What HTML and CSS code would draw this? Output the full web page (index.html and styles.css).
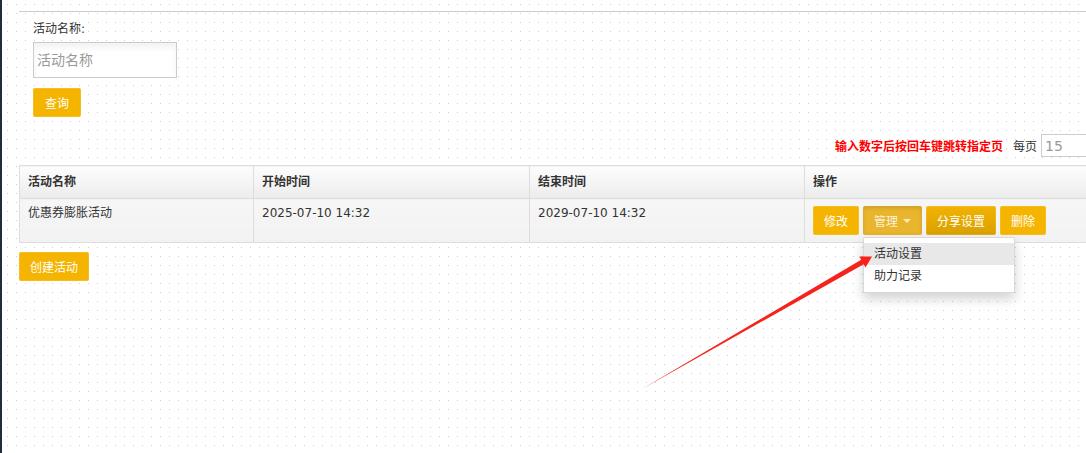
FILE: index.html
```html
<!DOCTYPE html>
<html lang="zh-CN">
<head>
    <meta charset="UTF-8">
    <meta name="viewport" content="width=device-width, initial-scale=1.0">
    <title>活动列表</title>
    <link rel="stylesheet" href="styles.css">
</head>
<body>

<div class="page">
    <form class="search">
        <label for="act-name">活动名称:</label>
        <input type="text" id="act-name" placeholder="活动名称">
        <button type="button" class="btn">查询</button>
    </form>

    <div class="pager">
        <span class="pager-tip">输入数字后按回车键跳转指定页</span>
        <span class="pager-label">每页</span>
        <input type="text" class="pager-size" value="15">
    </div>

    <table class="grid">
        <colgroup>
            <col style="width:234px">
            <col style="width:276px">
            <col style="width:275px">
            <col>
        </colgroup>
        <thead>
            <tr>
                <th>活动名称</th>
                <th>开始时间</th>
                <th>结束时间</th>
                <th>操作</th>
            </tr>
        </thead>
        <tbody>
            <tr>
                <td>优惠券膨胀活动</td>
                <td>2025-07-10 14:32</td>
                <td>2029-07-10 14:32</td>
                <td class="ops">
                    <div class="ops-row">
                        <button type="button" class="btn">修改</button>
                        <div class="btn-group">
                            <button type="button" class="btn active">管理 <span class="caret"></span></button>
                            <ul class="menu">
                                <li class="hover">活动设置</li>
                                <li>助力记录</li>
                            </ul>
                        </div>
                        <button type="button" class="btn hovered">分享设置</button>
                        <button type="button" class="btn">删除</button>
                    </div>
                </td>
            </tr>
        </tbody>
    </table>

    <button type="button" class="btn create">创建活动</button>
</div>

<!-- annotation arrow drawn over the page -->
<svg class="annotation" width="1086" height="453" viewBox="0 0 1086 453">
    <polygon points="642,389 863.7,264.2 865.5,267.6 872,256.5 859.2,256.6 861.2,259.8" fill="#f5231b"/>
</svg>

</body>
</html>
```

FILE: styles.css
```css
/* General Styling */
* {
    box-sizing: border-box;
    margin: 0;
    padding: 0;
}

html, body {
    height: 100%;
}

body {
    font-family: "DejaVu Sans", "Noto Sans CJK SC", sans-serif;
    font-size: 12px;
    color: #333;
    border-left: 2px solid #1f2d3d;
    overflow: hidden;
    position: relative;
    background-color: #cfcfcf;
    background-image:
        linear-gradient(90deg, #fff 8px, transparent 8px),
        linear-gradient(#fff 8px, transparent 8px);
    background-size: 9px 9px;
    background-position: -1px 5px;
}

.page {
    width: 1081px;
    margin: 11px 0 0 17px;
}

/* Search form */
.search {
    border-top: 1px solid #ccc;
    padding: 7px 14px 0;
    display: flex;
    flex-direction: column;
    align-items: flex-start;
}

.search label {
    line-height: 20px;
    margin-bottom: 3px;
}

.search input {
    width: 144px;
    height: 36px;
    padding: 0 3px;
    border: 1px solid #ccc;
    background: #fff;
    box-shadow: inset 0 5px 6px rgba(0, 0, 0, 0.05);
    font-family: inherit;
    font-size: 14px;
    color: #555;
    outline: none;
}

.search input::placeholder {
    color: #999;
}

.search .btn {
    margin-top: 10px;
    padding: 0 12px;
}

/* Buttons */
.btn {
    display: inline-flex;
    align-items: center;
    height: 29px;
    padding: 0 11px;
    border: none;
    border-radius: 2px;
    background: #f5b400;
    color: #fff;
    font-family: inherit;
    font-size: 12px;
    cursor: pointer;
    box-shadow: inset 0 0 0 1px rgba(255, 255, 255, 0.12);
}

.btn.active {
    background: #e9b52c;
    color: rgba(255, 255, 255, 0.85);
    box-shadow: inset 0 2px 4px rgba(0, 0, 0, 0.12);
}

.btn.hovered {
    background: linear-gradient(#f2b300, #d9a000);
}

.caret {
    display: inline-block;
    margin-left: 5px;
    border-top: 4px solid rgba(255, 255, 255, 0.7);
    border-left: 4px solid transparent;
    border-right: 4px solid transparent;
}

.btn-group {
    position: relative;
}

.menu {
    position: absolute;
    top: 100%;
    left: 0;
    margin-top: 2px;
    width: 152px;
    padding: 5px 0;
    list-style: none;
    background: #fff;
    border: 1px solid rgba(0, 0, 0, 0.15);
    border-radius: 2px;
    box-shadow: 0 6px 12px rgba(0, 0, 0, 0.175);
    z-index: 5;
}

.menu li {
    padding: 0 10px;
    line-height: 22px;
    color: #333;
}

.menu li.hover {
    background: #e8e8e8;
}

/* Pager */
.pager {
    display: flex;
    justify-content: flex-end;
    align-items: center;
    margin-top: 17px;
}

.pager-tip {
    color: #f00;
    font-weight: bold;
}

.pager-label {
    margin-left: 10px;
}

.pager-size {
    width: 59px;
    height: 23px;
    margin-left: 4px;
    padding: 0 3px;
    border: 1px solid #ccc;
    background: #fff;
    font-family: inherit;
    font-size: 14px;
    color: #999;
    outline: none;
}

/* Table */
.grid {
    width: 1081px;
    margin-top: 8px;
    border-collapse: collapse;
    table-layout: fixed;
}

.grid th,
.grid td {
    border: 1px solid #ddd;
    text-align: left;
    vertical-align: top;
    line-height: 16px;
}

.grid th {
    padding: 8px;
    font-weight: bold;
    background: linear-gradient(#fdfdfd, #ececec);
}

.grid td {
    padding: 6px 8px;
    background: linear-gradient(#f6f6f6, #f2f2f2);
}

.grid td.ops {
    padding: 7px 8px;
}

.ops-row {
    display: flex;
    gap: 4px;
}

.create {
    margin-top: 9px;
}

/* Annotation */
.annotation {
    position: absolute;
    top: 0;
    left: -2px;
    pointer-events: none;
    z-index: 10;
}
```
